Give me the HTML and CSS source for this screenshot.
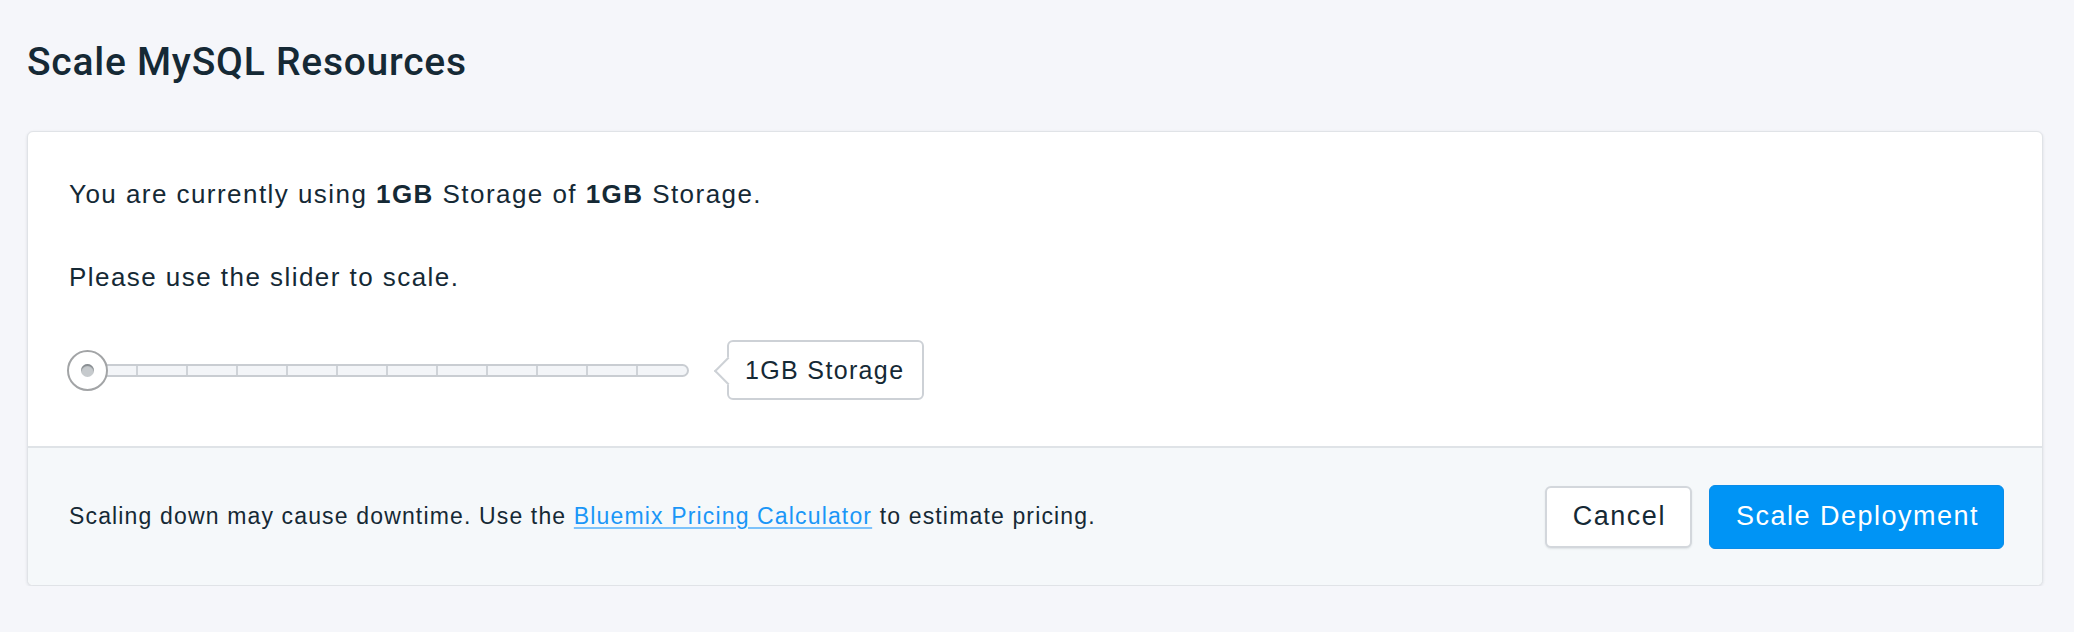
FILE: index.html
```html
<!DOCTYPE html>
<html lang="en">
<head>
<meta charset="utf-8">
<title>Scale MySQL Resources</title>
<link rel="stylesheet" href="styles.css">
</head>
<body>
<div class="page">
  <h1 class="title">Scale MySQL Resources</h1>
  <section class="card">
    <div class="card-body">
      <p class="line">You are currently using <strong>1GB</strong> Storage of <strong>1GB</strong> Storage.</p>
      <p class="line line-second">Please use the slider to scale.</p>
      <div class="slider-row">
        <div class="slider">
          <div class="track">
            <span class="seg"></span><span class="seg"></span><span class="seg"></span><span class="seg"></span>
            <span class="seg"></span><span class="seg"></span><span class="seg"></span><span class="seg"></span>
            <span class="seg"></span><span class="seg"></span><span class="seg"></span><span class="seg-last"></span>
          </div>
          <div class="knob"><span class="dot"></span></div>
        </div>
        <div class="bubble">1GB Storage</div>
      </div>
    </div>
    <div class="card-foot">
      <p class="note">Scaling down may cause downtime. Use the <a class="link" href="#">Bluemix Pricing Calculator</a> to estimate pricing.</p>
      <div class="actions">
        <button class="btn btn-cancel" type="button">Cancel</button>
        <button class="btn btn-primary" type="button">Scale Deployment</button>
      </div>
    </div>
  </section>
</div>
</body>
</html>
```

FILE: styles.css
```css
* { box-sizing: border-box; }

html, body {
  margin: 0;
  padding: 0;
  background: #f5f6fa;
}

body {
  font-family: "Liberation Sans", Arial, Helvetica, sans-serif;
  color: #152935;
}

.page {
  padding: 38px 31px 0 27px;
}

.title {
  margin: 0;
  font-family: Roboto, "Liberation Sans", Arial, sans-serif;
  font-size: 39px;
  line-height: 48px;
  font-weight: 500;
  letter-spacing: 0.75px;
  color: #152935;
}

.card {
  margin-top: 45px;
  background: #ffffff;
  border: 1px solid #e0e3e7;
  border-radius: 6px;
  box-shadow: 0 1px 3px rgba(21, 41, 53, 0.12);
  overflow: hidden;
}

.card-body {
  padding: 44px 41px 46px 41px;
  border-bottom: 2px solid #dfe3e7;
}

.line {
  margin: 0;
  font-size: 26px;
  line-height: 36px;
  letter-spacing: 1.45px;
}

.line strong { font-weight: 700; }

.line-second {
  margin-top: 47px;
}

.slider-row {
  margin-top: 45px;
  height: 60px;
  display: flex;
  align-items: center;
}

.slider {
  position: relative;
  margin-left: -2px;
  width: 622px;
  height: 41px;
  display: flex;
  align-items: center;
}

.track {
  margin-left: 13px;
  width: 609px;
  height: 13px;
  border: 2px solid #c9cdd2;
  border-radius: 7px;
  background: #f3f5f8;
  display: flex;
  padding-left: 6px;
}

.seg {
  flex: 0 0 50px;
  height: 100%;
  border-right: 2px solid #cfd3d8;
}

.seg-last {
  flex: 1 1 auto;
}

.knob {
  position: absolute;
  left: 0;
  top: 0;
  width: 41px;
  height: 41px;
  border-radius: 50%;
  border: 2px solid #a2a4a6;
  background: #ffffff;
  display: flex;
  align-items: center;
  justify-content: center;
}

.dot {
  width: 13px;
  height: 13px;
  border-radius: 50%;
  background: #c6cacd;
  box-shadow: inset 0 2px 1px #868b8f;
}

.bubble {
  position: relative;
  margin-left: 38px;
  height: 60px;
  padding: 0 18px 0 16px;
  border: 2px solid #cdd1d6;
  border-radius: 6px;
  background: #ffffff;
  display: flex;
  align-items: center;
  font-size: 25px;
  letter-spacing: 1.35px;
  color: #152935;
}

.bubble::before {
  content: "";
  position: absolute;
  left: -11px;
  top: 50%;
  width: 18px;
  height: 18px;
  margin-top: -9px;
  background: #ffffff;
  border-left: 2px solid #cdd1d6;
  border-bottom: 2px solid #cdd1d6;
  transform: rotate(45deg);
}

.card-foot {
  height: 137px;
  background: #f5f8fa;
  padding: 0 38px 0 41px;
  display: flex;
  align-items: center;
  justify-content: space-between;
}

.note {
  margin: 0;
  font-size: 23px;
  letter-spacing: 1.15px;
  color: #152935;
}

.link {
  color: #1a96f7;
  text-decoration: underline;
  text-decoration-color: #7cc2fb;
  text-decoration-thickness: 2px;
  text-underline-offset: 3px;
}

.actions {
  display: flex;
  align-items: center;
  gap: 17px;
}

.btn {
  font-family: "Liberation Sans", Arial, Helvetica, sans-serif;
  font-size: 27px;
  letter-spacing: 1.5px;
  border-radius: 6px;
  padding: 0 24px 0 26px;
  cursor: pointer;
}

.btn-cancel {
  height: 62px;
  background: #ffffff;
  color: #152935;
  border: 2px solid #d3d7dc;
  box-shadow: 0 1px 2px rgba(21, 41, 53, 0.1);
}

.btn-primary {
  height: 64px;
  background: #0094f5;
  color: #ffffff;
  border: 1px solid #0a8ce8;
}
```
